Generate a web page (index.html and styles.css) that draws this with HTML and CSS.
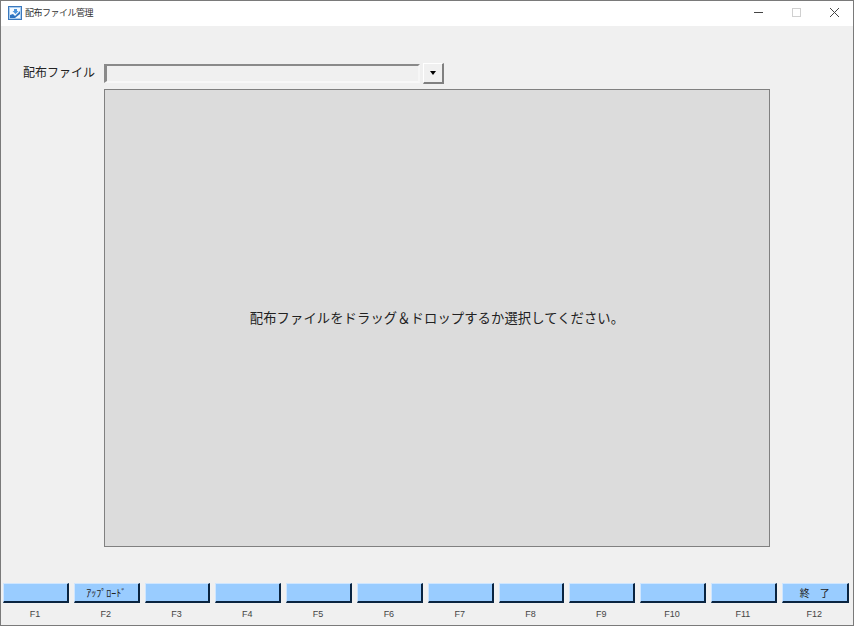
FILE: index.html
```html
<html>
    <head>
        <meta charset="utf-8">
        <link rel="stylesheet" href="styles.css">
    </head>
    <body>
        <div class="window">
            <div class="titlebar">
                <svg class="app-icon" width="14" height="14" viewBox="0 0 14 14">
                    <rect x="0.5" y="0.5" width="13" height="13" fill="#a9cdf0" stroke="#3a78bd"/>
                    <rect x="2" y="2" width="10" height="10" fill="#f4f9fe"/>
                    <path d="M2 9 L5 8 L7 10 L12 5 L12 8 L7 12 L2 12 Z" fill="#2f74c0"/>
                    <path d="M6 3 L9 3 L9 5 L10.5 5 L7.5 8 L4.5 5 L6 5 Z" fill="#4a94dc"/>
                </svg>
                <div class="title">配布ファイル管理</div>
                <div class="controls">
                    <svg width="46" height="25" viewBox="0 0 46 25"><path d="M23 11.5 H32" stroke="#444" fill="none"/></svg>
                    <svg width="32" height="25" viewBox="0 0 32 25"><rect x="15.5" y="7.5" width="8" height="8" stroke="#d0d0d0" fill="none"/></svg>
                    <svg width="44" height="25" viewBox="0 0 44 25"><path d="M21 7 L30 16 M30 7 L21 16" stroke="#444" fill="none"/></svg>
                </div>
            </div>
            <div class="content">
                <div class="file-row">
                    <label class="file-label">配布ファイル</label>
                    <div class="combo-text"></div>
                    <div class="combo-btn"><span class="arrow"></span></div>
                </div>
                <div class="drop-area">配布ファイルをドラッグ＆ドロップするか選択してください。</div>
                <div class="fkeys">
                    <div class="fkey"><div class="fbtn"></div><div class="flabel">F1</div></div>
                    <div class="fkey"><div class="fbtn">ｱｯﾌﾟﾛｰﾄﾞ</div><div class="flabel">F2</div></div>
                    <div class="fkey"><div class="fbtn"></div><div class="flabel">F3</div></div>
                    <div class="fkey"><div class="fbtn"></div><div class="flabel">F4</div></div>
                    <div class="fkey"><div class="fbtn"></div><div class="flabel">F5</div></div>
                    <div class="fkey"><div class="fbtn"></div><div class="flabel">F6</div></div>
                    <div class="fkey"><div class="fbtn"></div><div class="flabel">F7</div></div>
                    <div class="fkey"><div class="fbtn"></div><div class="flabel">F8</div></div>
                    <div class="fkey"><div class="fbtn"></div><div class="flabel">F9</div></div>
                    <div class="fkey"><div class="fbtn"></div><div class="flabel">F10</div></div>
                    <div class="fkey"><div class="fbtn"></div><div class="flabel">F11</div></div>
                    <div class="fkey"><div class="fbtn">終　了</div><div class="flabel">F12</div></div>
                </div>
            </div>
        </div>
    </body>
</html>
```

FILE: styles.css
```css
html, body {
    margin: 0;
    padding: 0;
}
body {
    width: 854px;
    height: 626px;
    overflow: hidden;
    font-family: "Noto Sans CJK JP", "Liberation Sans", sans-serif;
    color: #222;
}
.window {
    width: 854px;
    height: 626px;
    box-sizing: border-box;
    border: 1px solid #7a7a7a;
    display: flex;
    flex-direction: column;
    background-color: #f0f0f0;
}
.titlebar {
    height: 25px;
    flex: none;
    display: flex;
    align-items: center;
    background-color: #fff;
    padding-left: 7px;
}
.app-icon {
    margin-right: 3px;
    margin-bottom: 1px;
}
.title {
    font-size: 9px;
    letter-spacing: -0.5px;
    color: #333;
    margin-bottom: 2px;
}
.controls {
    margin-left: auto;
    display: flex;
}
.content {
    flex: 1;
    display: flex;
    flex-direction: column;
    padding: 37px 4px 0 2px;
}
.file-row {
    display: flex;
    align-items: center;
    height: 21px;
    padding-left: 20px;
}
.file-label {
    width: 81px;
    font-size: 12px;
    margin-bottom: 4px;
}
.combo-text {
    width: 311px;
    height: 15px;
    border-style: solid;
    border-width: 2px 2px 2px 3px;
    border-color: #8a8a8a #f6f6f6 #f8f8f8 #8a8a8a;
    background-color: #f0f0f0;
}
.combo-btn {
    width: 18px;
    height: 18px;
    margin-left: 3px;
    border-style: solid;
    border-color: #fff #808080 #808080 #fff;
    border-width: 1px 2px 2px 1px;
    display: flex;
    align-items: center;
    justify-content: center;
}
.arrow {
    width: 0;
    height: 0;
    border-style: solid;
    border-width: 4px 3.5px 0 3.5px;
    border-color: #000 transparent transparent transparent;
}
.drop-area {
    width: 664px;
    height: 454px;
    padding-bottom: 2px;
    margin: 5px 0 0 101px;
    border: 1px solid #808080;
    background-color: #dcdcdc;
    display: flex;
    align-items: center;
    justify-content: center;
    font-size: 13.33px;
    letter-spacing: 0.07px;
    color: #222;
}
.fkeys {
    display: grid;
    grid-template-columns: repeat(11, 65.8px) 67px;
    column-gap: 5px;
    margin-top: 36px;
}
.fkey {
    display: flex;
    flex-direction: column;
    align-items: stretch;
}
.fbtn {
    height: 17px;
    border-style: solid;
    border-color: #cfe6ff #0a2440 #0a2440 #cfe6ff;
    border-width: 1px 2px 2px 1px;
    background-color: #99ccff;
    font-size: 10px;
    line-height: 17px;
    text-align: center;
    color: #222;
    overflow: hidden;
}
.flabel {
    font-family: "Liberation Sans", sans-serif;
    font-size: 9px;
    text-align: center;
    margin-top: 5px;
    line-height: 12px;
    color: #444;
    padding-right: 2px;
}
```
